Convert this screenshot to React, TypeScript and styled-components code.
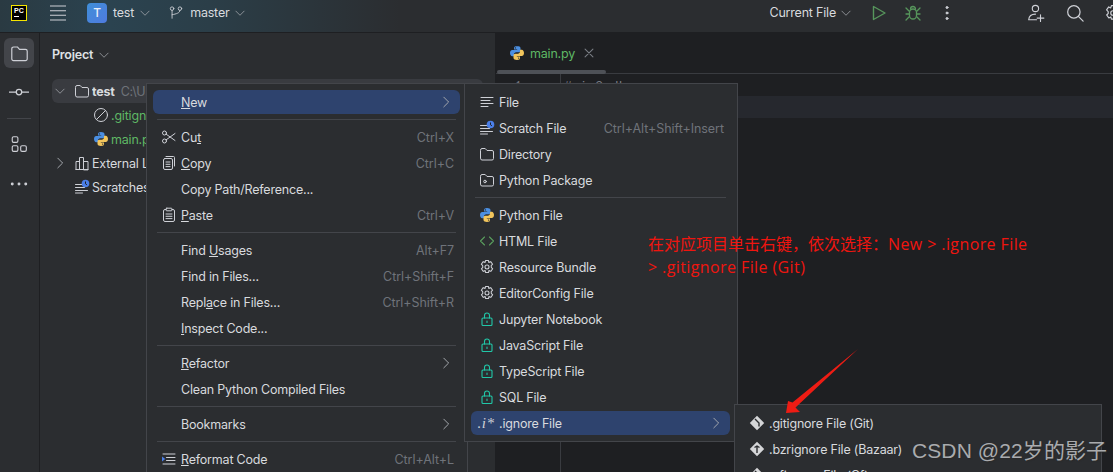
import React from "react";
import styled, { createGlobalStyle } from "styled-components";

const GlobalStyle = createGlobalStyle`
html, body {
  margin: 0;
  padding: 0;
  background: #1e1f22;
  overflow: hidden;
}
* { box-sizing: border-box; }
`;

const Page = styled.div`
position: relative;
width: 1113px;
height: 472px;
overflow: hidden;
display: flex;
flex-direction: column;
font-family: Inter, "Noto Sans", sans-serif;
font-size: 12.5px;
letter-spacing: -0.2px;
color: #d8dade;
`;

//--------------------------------------------------------------------

const TopBar = styled.header`
height: 33px;
flex: none;
display: flex;
align-items: center;
padding: 0 0 7px 11px;
border-bottom: 1px solid #1e1f22;
background: linear-gradient(90deg, #2a3a42 0, #2b4350 110px, #2b3e48 210px, #2b2d30 400px);
`;

const Logo = styled.div`
width: 16px;
height: 16px;
flex: none;
background: #000;
border: 1px solid #f5e400;
color: #fff;
font: 700 7px/8px "Liberation Sans", sans-serif;
letter-spacing: 0;
padding: 1px 0 0 2px;
margin-right: 23px;
&::after {
  content: "";
  display: block;
  width: 5px;
  height: 1px;
  margin-top: 1px;
  background: #fff;
}
`;

const Avatar = styled.div`
width: 20px;
height: 20px;
flex: none;
margin-left: 21px;
border-radius: 4px;
background: linear-gradient(135deg, #3f8fd8, #4f7be0);
color: #e8eefa;
display: flex;
align-items: center;
justify-content: center;
font-size: 12px;
font-weight: 500;
`;

const BarLabel = styled.span<{ $left: number }>`
margin-left: ${(p) => p.$left}px;
color: #d8dade;
white-space: nowrap;
`;

const Spacer = styled.div`
flex: 1;
`;

const IconSlot = styled.span<{ $left?: number; $right?: number }>`
display: inline-flex;
flex: none;
margin-left: ${(p) => p.$left || 0}px;
margin-right: ${(p) => p.$right || 0}px;
`;

//--------------------------------------------------------------------

const Body = styled.div`
flex: 1;
display: flex;
min-height: 0;
`;

const Rail = styled.nav`
width: 40px;
flex: none;
background: #2b2d30;
border-right: 1px solid #1e1f22;
display: flex;
flex-direction: column;
align-items: center;
padding: 5px 1px 0 0;
`;

const RailButton = styled.div<{ $active?: boolean; $mt?: number }>`
width: 30px;
height: 30px;
margin-top: ${(p) => p.$mt || 0}px;
border-radius: 6px;
background: ${(p) => (p.$active ? "#43454a" : "transparent")};
display: flex;
align-items: center;
justify-content: center;
`;

const RailSep = styled.div`
width: 24px;
height: 1px;
background: #43454a;
margin-top: 11px;
`;

const ProjectPanel = styled.aside`
width: 456px;
flex: none;
background: #2b2d30;
border-right: 1px solid #1e1f22;
padding: 0 12px;
`;

const PanelHead = styled.div`
height: 46px;
display: flex;
align-items: center;
gap: 5px;
font-weight: 600;
color: #dfe1e5;
padding-bottom: 3px;
`;

const TreeRow = styled.div<{ $active?: boolean; $indent: number }>`
height: 24px;
display: flex;
align-items: center;
width: 431px;
padding-left: ${(p) => p.$indent}px;
border-radius: 6px;
background: ${(p) => (p.$active ? "#393b40" : "transparent")};
white-space: nowrap;
`;

const TreeName = styled.span<{ $green?: boolean; $bold?: boolean; $clip?: number }>`
margin-left: 2px;
color: ${(p) => (p.$green ? "#5fb865" : "#d8dade")};
font-weight: ${(p) => (p.$bold ? 700 : 400)};
overflow: hidden;
flex: none;
max-width: ${(p) => (p.$clip ? p.$clip + "px" : "none")};
`;

const TreeHint = styled.span`
margin-left: 6px;
color: #6f737a;
overflow: hidden;
flex: none;
max-width: 25px;
`;

const ChevronSlot = styled.span`
width: 16px;
margin-right: 6px;
display: inline-flex;
justify-content: center;
`;

//--------------------------------------------------------------------

const Editor = styled.main`
flex: 1;
position: relative;
background: #1e1f22;
display: flex;
flex-direction: column;
min-width: 0;
`;

const TabStrip = styled.div`
height: 41px;
flex: none;
display: flex;
align-items: center;
padding: 0 0 0 13px;
border-bottom: 1px solid #393b40;
`;

const TabName = styled.span`
color: #5fb865;
margin-left: 5px;
`;

const TabClose = styled.span`
margin-left: 7px;
display: inline-flex;
`;

const TabScroll = styled.div`
position: absolute;
top: 37px;
left: 1px;
width: 109px;
height: 4px;
border-radius: 2px;
background: #4e5157;
`;

const CodeArea = styled.div`
flex: 1;
display: flex;
`;

const Gutter = styled.div`
width: 65px;
flex: none;
border-right: 1px solid #393b40;
font: 13px/25px "Liberation Mono", monospace;
letter-spacing: 0;
color: #6f737a;
text-align: right;
padding-right: 38px;
`;

const Lines = styled.div`
flex: 1;
font: 13px/25px "Liberation Mono", monospace;
letter-spacing: 0;
color: #7a7e85;
`;

const CodeLine = styled.div<{ $current?: boolean }>`
height: 22px;
padding-left: 3px;
background: ${(p) => (p.$current ? "#26282e" : "transparent")};
`;

//--------------------------------------------------------------------

const Menu = styled.div<{ $x: number; $y: number; $w: number }>`
position: absolute;
left: ${(p) => p.$x}px;
top: ${(p) => p.$y}px;
width: ${(p) => p.$w}px;
padding: 5px 7px 5px 6px;
background: #2b2d30;
border: 1px solid #43454a;
`;

const Row = styled.div<{ $active?: boolean }>`
height: 26px;
display: flex;
align-items: center;
position: relative;
padding: 0 6px 0 28px;
color: #d8dade;
white-space: nowrap;
&::before {
  content: "";
  position: absolute;
  left: 0;
  right: 0;
  top: 1px;
  bottom: 1px;
  border-radius: 6px;
  background: ${(p) => (p.$active ? "#2e436e" : "transparent")};
}
`;

const RowIcon = styled.span`
position: absolute;
left: 8px;
top: 5px;
width: 16px;
height: 16px;
display: flex;
align-items: center;
justify-content: center;
`;

const RowLabel = styled.span`
position: relative;
flex: 1;
`;

const Shortcut = styled.span`
position: relative;
color: #6f737a;
letter-spacing: -0.05px;
`;

const Arrow = styled.span`
position: relative;
display: inline-flex;
margin-right: 1px;
`;

const MenuSep = styled.div`
height: 1px;
margin: 4px;
background: #43454a;
`;

const IgnoreGlyph = styled.span`
font: italic 400 15px/16px "Liberation Serif", serif;
color: #ced0d6;
letter-spacing: 0.5px;
margin-left: -2px;
`;

//--------------------------------------------------------------------

const Note = styled.div`
position: absolute;
left: 648px;
top: 233px;
font: 16px/23px "Open Sans", "Noto Sans CJK SC", sans-serif;
letter-spacing: 0;
color: #f0150f;
white-space: nowrap;
`;

const NoteLatin = styled.span`
letter-spacing: 0.4px;
`;

const Watermark = styled.div`
position: absolute;
left: 912px;
top: 438px;
font: 21px/26px "Liberation Sans", "Noto Sans CJK SC", sans-serif;
letter-spacing: 0.1px;
color: #a9abae;
text-shadow: 1px 1px 1px #2a2a2a;
white-space: nowrap;
`;

const RedArrow = styled.svg`
position: absolute;
left: 780px;
top: 345px;
`;

//--------------------------------------------------------------------

const Svg = ({ size = 16, children, color = "#ced0d6", sw = 1 }: { size?: number; children: React.ReactNode; color?: string; sw?: number }) => (
  <svg width={size} height={size} viewBox="0 0 16 16" fill="none" stroke={color} strokeWidth={sw} strokeLinecap="round" strokeLinejoin="round">
    {children}
  </svg>
);

const ChevDown = ({ color = "#a8abb0" }: { color?: string }) => (
  <Svg size={12} color={color}>
    <path d="M2.5 5.5 8 11l5.5-5.5" />
  </Svg>
);
const ChevRight = ({ color = "#a8abb0" }: { color?: string }) => (
  <Svg size={14} color={color} sw={1.1}>
    <path d="M5.5 2.5 11 8l-5.5 5.5" />
  </Svg>
);
const FolderIcon = ({ size = 16 }: { size?: number }) => (
  <Svg size={size}>
    <path d="M1.5 4a1.5 1.5 0 0 1 1.5-1.5h3.2L8 4.5h5A1.5 1.5 0 0 1 14.5 6v6.5A1.5 1.5 0 0 1 13 14H3a1.5 1.5 0 0 1-1.5-1.5z" />
  </Svg>
);
const PackageIcon = () => (
  <Svg>
    <path d="M1.5 4a1.5 1.5 0 0 1 1.5-1.5h3.2L8 4.5h5A1.5 1.5 0 0 1 14.5 6v6.5A1.5 1.5 0 0 1 13 14H3a1.5 1.5 0 0 1-1.5-1.5z" />
    <circle cx="6" cy="9.5" r="1.3" />
  </Svg>
);
const PythonIcon = () => (
  <svg width={16} height={16} viewBox="0 0 16 16">
    <path fill="#4b8fe2" d="M8 1C5.6 1 5 2 5 3v1.5h3.2V5H3.2C2 5 1 6.1 1 8s1 3.2 2.2 3.2H5V9.5c0-1.2 1-2.2 2.2-2.2h2.6c1 0 1.7-.8 1.7-1.7V3c0-1.2-1.5-2-3.5-2z" />
    <path fill="#f2c55c" d="M8 15c2.4 0 3-1 3-2v-1.5H7.8V11h5C14 11 15 9.9 15 8s-1-3.2-2.2-3.2H11v1.7c0 1.2-1 2.2-2.2 2.2H6.2c-1 0-1.7.8-1.7 1.7V13c0 1.2 1.5 2 3.5 2z" />
    <circle cx="6.4" cy="2.9" r=".7" fill="#2b2d30" />
    <circle cx="9.6" cy="13.1" r=".7" fill="#2b2d30" />
  </svg>
);
const LinesIcon = () => (
  <Svg>
    <path d="M2 3.5h12M2 6.5h9M2 9.5h12M2 12.5h7" />
  </Svg>
);
const ScratchIcon = () => (
  <svg width={16} height={16} viewBox="0 0 16 16" fill="none">
    <path stroke="#ced0d6" strokeLinecap="round" d="M1.5 5.5h7M1.5 8.5h9M1.5 11.5h12M1.5 14h7" />
    <circle cx="11.5" cy="4.5" r="3.8" fill="#4b7fe8" />
    <path stroke="#1e1f22" d="M11.5 2.5v2.3l1.4 1" />
  </svg>
);
const GearIcon = ({ size = 16 }: { size?: number }) => (
  <Svg size={size} sw={1.05}>
    <path d="M6.6 1.5h2.8l.5 2 1.8-.9 1.9 2.6-1.4 1.5.1 1.6 1.4 1.5-1.9 2.6-1.8-.9-.5 2H6.6l-.5-2-1.8.9-1.9-2.6 1.4-1.5-.1-1.6-1.4-1.5 1.9-2.6 1.8.9z" />
    <circle cx="8" cy="8" r="2" />
  </Svg>
);
const LockIcon = () => (
  <Svg color="#21c7a8" sw={1.1}>
    <rect x="3" y="7" width="10" height="7.5" rx="1" />
    <path d="M5.5 7V4.5a2.5 2.5 0 0 1 5 0V7" />
    <path d="M8 10v1.5" />
  </Svg>
);
const GitIcon = ({ plus }: { plus?: boolean }) => (
  <svg width={16} height={16} viewBox="0 0 16 16">
    <path fill="#d5d6d8" d="M8 .8 15.2 8 8 15.2.8 8z" />
    <path fill="none" stroke="#2b2d30" strokeWidth="1.4" d={plus ? "M5.5 6.5 8 5l2.5 1.5M8 5v7" : "M6 4l4 4v3.5"} />
  </svg>
);
const ScissorsIcon = () => (
  <Svg>
    <circle cx="3.5" cy="4" r="2" />
    <circle cx="3.5" cy="12" r="2" />
    <path d="M5.2 5.2 14 11.5M5.2 10.8 14 4.5" />
  </Svg>
);
const CopyIcon = () => (
  <Svg>
    <path d="M5 1.5h7.5a1 1 0 0 1 1 1V11" />
    <rect x="2.5" y="3.5" width="9" height="11" rx="1.5" />
    <path d="M5 7h4M5 9.3h4M5 11.6h4" />
  </Svg>
);
const PasteIcon = () => (
  <Svg>
    <path d="M5 2.5H4a1.5 1.5 0 0 0-1.5 1.5v9A1.5 1.5 0 0 0 4 14.5h8a1.5 1.5 0 0 0 1.5-1.5V4A1.5 1.5 0 0 0 12 2.5h-1" />
    <rect x="5" y="1.2" width="6" height="2.6" rx=".8" />
    <path d="M5 7h6M5 9.3h6M5 11.6h6" />
  </Svg>
);
const ReformatIcon = () => (
  <svg width={16} height={16} viewBox="0 0 16 16" fill="none">
    <path stroke="#ced0d6" strokeLinecap="round" d="M2 3h12M5.5 6.5H14M5.5 9.5H14M2 13h12" />
    <path fill="#4b7fe8" d="M1 5.5 4.2 8 1 10.5z" />
  </svg>
);
const HtmlIcon = () => (
  <Svg color="#5a9e5e" sw={1.1}>
    <path d="M5.5 4 1.5 8l4 4M10.5 4l4 4-4 4" />
  </Svg>
);

//--------------------------------------------------------------------

type Item =
  | "sep"
  | {
      label: React.ReactNode;
      icon?: React.ReactNode;
      keys?: string;
      more?: boolean;
      active?: boolean;
    };

const mainMenu: Item[] = [
  { label: <><u>N</u>ew</>, more: true, active: true },
  "sep",
  { label: <>Cu<u>t</u></>, icon: <ScissorsIcon />, keys: "Ctrl+X" },
  { label: <><u>C</u>opy</>, icon: <CopyIcon />, keys: "Ctrl+C" },
  { label: "Copy Path/Reference..." },
  { label: <><u>P</u>aste</>, icon: <PasteIcon />, keys: "Ctrl+V" },
  "sep",
  { label: <>Find <u>U</u>sages</>, keys: "Alt+F7" },
  { label: "Find in Files...", keys: "Ctrl+Shift+F" },
  { label: <>Repl<u>a</u>ce in Files...</>, keys: "Ctrl+Shift+R" },
  { label: <><u>I</u>nspect Code...</> },
  "sep",
  { label: <><u>R</u>efactor</>, more: true },
  { label: "Clean Python Compiled Files" },
  "sep",
  { label: "Bookmarks", more: true },
  "sep",
  { label: <><u>R</u>eformat Code</>, icon: <ReformatIcon />, keys: "Ctrl+Alt+L" },
];

const newMenu: Item[] = [
  { label: "File", icon: <LinesIcon /> },
  { label: "Scratch File", icon: <ScratchIcon />, keys: "Ctrl+Alt+Shift+Insert" },
  { label: "Directory", icon: <FolderIcon /> },
  { label: "Python Package", icon: <PackageIcon /> },
  "sep",
  { label: "Python File", icon: <PythonIcon /> },
  { label: "HTML File", icon: <HtmlIcon /> },
  { label: "Resource Bundle", icon: <GearIcon /> },
  { label: "EditorConfig File", icon: <GearIcon /> },
  { label: "Jupyter Notebook", icon: <LockIcon /> },
  { label: "JavaScript File", icon: <LockIcon /> },
  { label: "TypeScript File", icon: <LockIcon /> },
  { label: "SQL File", icon: <LockIcon /> },
  { label: ".ignore File", icon: <IgnoreGlyph>.i*</IgnoreGlyph>, more: true, active: true },
];

const ignoreMenu: Item[] = [
  { label: ".gitignore File (Git)", icon: <GitIcon /> },
  { label: ".bzrignore File (Bazaar)", icon: <GitIcon plus /> },
  { label: ".cfignore File (Cf)", icon: <GitIcon /> },
];

function MenuList({ items, x, y, w }: { items: Item[]; x: number; y: number; w: number }) {
  return (
    <Menu $x={x} $y={y} $w={w}>
      {items.map((item, i) =>
        item === "sep" ? (
          <MenuSep key={i} />
        ) : (
          <Row key={i} $active={item.active}>
            {item.icon && <RowIcon>{item.icon}</RowIcon>}
            <RowLabel>{item.label}</RowLabel>
            {item.keys && <Shortcut>{item.keys}</Shortcut>}
            {item.more && (
              <Arrow>
                <ChevRight />
              </Arrow>
            )}
          </Row>
        )
      )}
    </Menu>
  );
}

export default function App() {
  return (
    <Page>
      <GlobalStyle />
      <TopBar>
        <Logo>PC</Logo>
        <Svg size={16} sw={1.1}>
          <path d="M0 1h16M0 5.7h16M0 10.3h16M0 15h16" />
        </Svg>
        <Avatar>T</Avatar>
        <BarLabel $left={6}>test</BarLabel>
        <IconSlot $left={5}><ChevDown /></IconSlot>
        <IconSlot $left={18}>
          <Svg size={14}>
            <circle cx="3.5" cy="3" r="2" />
            <circle cx="12.5" cy="3" r="2" />
            <path d="M3.5 5v9M12.5 5c0 3-4 4-9 5" />
          </Svg>
        </IconSlot>
        <BarLabel $left={7}>master</BarLabel>
        <IconSlot $left={5}><ChevDown /></IconSlot>
        <Spacer />
        <BarLabel $left={0}>Current File</BarLabel>
        <IconSlot $left={4}><ChevDown /></IconSlot>
        <IconSlot $left={19}>
          <Svg size={16} color="#57965c" sw={1.4}>
            <path d="M2.5 1.5v13L14 8z" />
          </Svg>
        </IconSlot>
        <IconSlot $left={18}>
          <Svg size={16} color="#57965c" sw={1.3}>
            <rect x="4.5" y="4" width="7" height="10" rx="3.5" />
            <path d="M5.5 4a2.5 2.5 0 0 1 5 0M1 3l3 3M15 3l-3 3M1 9h3M15 9h-3M1 15l3-3M15 15l-3-3" />
          </Svg>
        </IconSlot>
        <IconSlot $left={18}>
          <Svg size={16}>
            <circle cx="8" cy="2.5" r="1" fill="#ced0d6" />
            <circle cx="8" cy="8" r="1" fill="#ced0d6" />
            <circle cx="8" cy="13.5" r="1" fill="#ced0d6" />
          </Svg>
        </IconSlot>
        <IconSlot $left={72}>
          <Svg size={18} sw={1}>
            <circle cx="7.5" cy="4" r="2.8" />
            <path d="M1.5 14c.3-3.5 2.8-5 6-5M1.5 14h7M12 9.5v6M9 12.5h6" />
          </Svg>
        </IconSlot>
        <IconSlot $left={21}>
          <Svg size={18} sw={1.1}>
            <circle cx="7" cy="7" r="5.5" />
            <path d="m11 11 4.2 4.2" />
          </Svg>
        </IconSlot>
        <IconSlot $left={20} $right={-9}>
          <GearIcon size={18} />
        </IconSlot>
      </TopBar>

      <Body>
        <Rail>
          <RailButton $active><FolderIcon size={19} /></RailButton>
          <RailButton $mt={9}>
            <Svg size={20}>
              <circle cx="8" cy="8" r="2.2" />
              <path d="M0 8h5.8M10.2 8H16" />
            </Svg>
          </RailButton>
          <RailSep />
          <RailButton $mt={10}>
            <Svg size={18}>
              <rect x="2" y="1.5" width="5" height="5" rx="1.2" />
              <rect x="2" y="9.5" width="5" height="5" rx="1.2" />
              <rect x="9.5" y="9.5" width="5" height="5" rx="1.2" />
            </Svg>
          </RailButton>
          <RailButton $mt={10}>
            <Svg size={18}>
              <circle cx="2" cy="8" r=".8" fill="#ced0d6" />
              <circle cx="8" cy="8" r=".8" fill="#ced0d6" />
              <circle cx="14" cy="8" r=".8" fill="#ced0d6" />
            </Svg>
          </RailButton>
        </Rail>

        <ProjectPanel>
          <PanelHead>
            Project
            <ChevDown />
          </PanelHead>
          <TreeRow $active $indent={0}>
            <ChevronSlot><ChevDown /></ChevronSlot>
            <FolderIcon />
            <TreeName $bold>test</TreeName>
            <TreeHint>C:\Users\Administrator\PycharmProjects\test</TreeHint>
          </TreeRow>
          <TreeRow $indent={41}>
            <Svg>
              <circle cx="8" cy="8" r="6.5" />
              <path d="M3.5 12.5l9-9" />
            </Svg>
            <TreeName $green $clip={35}>.gitignore</TreeName>
          </TreeRow>
          <TreeRow $indent={41}>
            <PythonIcon />
            <TreeName $green $clip={35}>main.py</TreeName>
          </TreeRow>
          <TreeRow $indent={0}>
            <ChevronSlot><ChevRight /></ChevronSlot>
            <Svg>
              <path d="M2 14.5V6.5h3.5v8M5.5 14.5V2.5h4v12M9.5 14.5V6.5H14v8zM2 14.5h12" />
            </Svg>
            <TreeName $clip={54}>External Libraries</TreeName>
          </TreeRow>
          <TreeRow $indent={22}>
            <ScratchIcon />
            <TreeName $clip={54}>Scratches and Consoles</TreeName>
          </TreeRow>
        </ProjectPanel>

        <Editor>
          <TabStrip>
            <PythonIcon />
            <TabName>main.py</TabName>
            <TabClose>
              <Svg size={14} color="#7a7e85" sw={1.2}>
                <path d="M3.5 3.5l9 9M12.5 3.5l-9 9" />
              </Svg>
            </TabClose>
          </TabStrip>
          <TabScroll />
          <CodeArea>
            <Gutter>1</Gutter>
            <Lines>
              <CodeLine>#pip3.dkm</CodeLine>
              <CodeLine $current />
            </Lines>
          </CodeArea>
        </Editor>
      </Body>

      <MenuList items={mainMenu} x={146} y={83} w={322} />
      <MenuList items={newMenu} x={464} y={83} w={274} />
      <MenuList items={ignoreMenu} x={734} y={404} w={368} />

      <Note>
        在对应项目单击右键，依次选择：<NoteLatin>New &gt; .ignore File</NoteLatin>
        <br />
        <NoteLatin>&gt; .gitignore File (Git)</NoteLatin>
      </Note>
      <RedArrow width={90} height={75} viewBox="0 0 90 75">
        <path fill="#ee1c14" d="M78 4 12.5 57.5 8 56 6 68l14-1-4.5-4.5z" />
      </RedArrow>
      <Watermark>CSDN @22岁的影子</Watermark>
    </Page>
  );
}
